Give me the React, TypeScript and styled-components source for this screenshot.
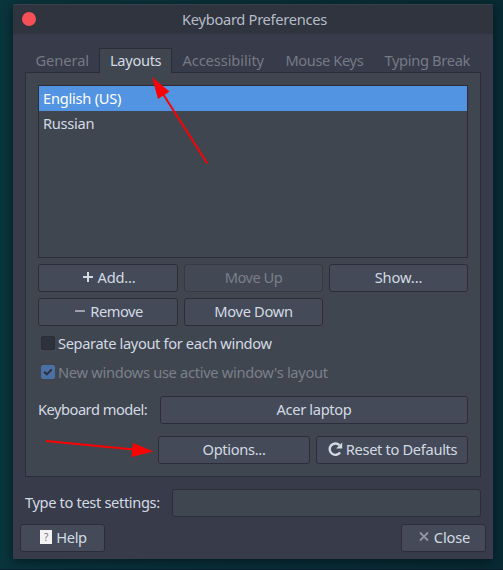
import React from "react";
import styled, { createGlobalStyle } from "styled-components";

const GlobalStyle = createGlobalStyle`
  * { box-sizing: border-box; }
  body {
    margin: 0;
    font-family: "Noto Sans", "Open Sans", sans-serif;
    font-size: 14.67px;
    line-height: 20px;
    color: #d3dae3;
  }
`;

const Desktop = styled.div`
  position: relative;
  width: 503px;
  height: 570px;
  padding: 4px 10px 0 13px;
  overflow: hidden;
  background: linear-gradient(90deg, #0a353d, #082b34);
  border-bottom: 1px solid #081c2e;
`;

const Window = styled.div`
  display: flex;
  flex-direction: column;
  width: 480px;
  height: 555px;
  border-radius: 2px 2px 0 0;
  background: #383b49;
  box-shadow: 0 3px 11px rgba(0, 10, 15, 0.6);
`;

const TitleBar = styled.header`
  display: grid;
  grid-template-columns: 32px 1fr 29px;
  align-items: center;
  height: 30px;
  padding: 0;
  border-top: 1px solid #3a404b;
  border-radius: 2px 2px 0 0;
  background: #2f343f;
`;

const CloseDot = styled.button`
  width: 14px;
  height: 14px;
  margin: -1px 0 0 9px;
  padding: 0;
  border: 0;
  border-radius: 50%;
  background: #f55058;
`;

const Text = styled.span<{ $track?: number }>`
  white-space: nowrap;
  letter-spacing: ${(p) => p.$track ?? -0.33}px;
`;

const Title = styled.h1`
  margin: -2px 0 0;
  text-align: center;
  font-size: inherit;
  font-weight: 400;
  color: #b6bcc8;
`;

const Tabs = styled.nav`
  display: flex;
  height: 25px;
  margin: 14px 12px -1px;
`;

const Tab = styled.div<{ $width: number; $active?: boolean }>`
  width: ${(p) => p.$width}px;
  height: 25px;
  padding: ${(p) => (p.$active ? "1px 0 0 10px" : "2px 0 0 10.4px")};
  border: ${(p) => (p.$active ? "1px solid #2b2e39" : "0")};
  border-bottom: 0;
  background: ${(p) => (p.$active ? "#404650" : "transparent")};
  color: ${(p) => (p.$active ? "#d3dae3" : "#767a85")};
  white-space: nowrap;
  z-index: 1;
`;

const Panel = styled.section`
  width: 456px;
  height: 405px;
  margin-left: 12px;
  padding: 12px;
  border: 1px solid #2b2e39;
  background: #404650;
`;

const List = styled.div`
  height: 173px;
  border: 1px solid #2b2e39;
`;

const ListRow = styled.div<{ $selected?: boolean }>`
  height: 25px;
  padding: 2px 4px;
  background: ${(p) => (p.$selected ? "#5294e2" : "transparent")};
  color: ${(p) => (p.$selected ? "#ffffff" : "#d3dae3")};
`;

const ButtonGrid = styled.div`
  display: grid;
  grid-template-columns: 140px 139px 139px;
  gap: 6px;
  margin-top: 6px;
`;

const Button = styled.button<{ $width?: number; $gap?: number; $shift?: number }>`
  display: flex;
  align-items: center;
  justify-content: center;
  gap: ${(p) => p.$gap ?? 5}px;
  width: ${(p) => (p.$width ? `${p.$width}px` : "100%")};
  height: 28px;
  padding: 0 0 2px ${(p) => p.$shift ?? 0}px;
  border: 1px solid #2b2e39;
  border-radius: 3px;
  background: #444a58;
  color: #d3dae3;
  font: inherit;
  &:disabled {
    border-color: #353945;
    background: #424854;
    color: #7a7f89;
  }
`;

const CheckRow = styled.label<{ $top: number; $muted?: boolean }>`
  display: flex;
  align-items: center;
  gap: 3px;
  height: 20px;
  margin: ${(p) => p.$top}px 0 0 3px;
  color: ${(p) => (p.$muted ? "#7b808a" : "#d3dae3")};
`;

const CheckBox = styled.span<{ $checked?: boolean }>`
  display: flex;
  width: 14px;
  height: 14px;
  border: 1px solid ${(p) => (p.$checked ? "#4a70a5" : "#292c36")};
  border-radius: 2px;
  background: ${(p) => (p.$checked ? "#4a70a5" : "#2e323d")};
`;

const FieldRow = styled.div<{ $top: number; $left?: number }>`
  display: flex;
  align-items: center;
  justify-content: space-between;
  height: 28px;
  margin: ${(p) => p.$top}px 0 0 ${(p) => p.$left ?? 0}px;
`;

const FieldLabel = styled(Text)`
  padding-bottom: 2px;
`;

const Footer = styled.footer`
  padding: 0 7px;
`;

const TestRow = styled(FieldRow)`
  padding: 0 5px;
`;

const Entry = styled.input`
  width: 309px;
  height: 28px;
  border: 1px solid #2b2e39;
  border-radius: 3px;
  background: #404650;
`;

const Arrows = styled.svg`
  position: absolute;
  inset: 0;
  z-index: 2;
  pointer-events: none;
`;

const Glyph = styled.svg`
  display: block;
  flex: none;
`;

const HelpMark = styled.span`
  width: 12px;
  height: 14px;
  background: #f2f2f2;
  color: #777;
  font: 10px/15px "Noto Sans", sans-serif;
  text-align: center;
`;

export default function App() {
  return (
    <>
      <GlobalStyle />
      <Desktop>
        <Window>
          <TitleBar>
            <CloseDot aria-label="Close window" />
            <Title><Text $track={-0.3}>Keyboard Preferences</Text></Title>
          </TitleBar>
          <Tabs>
            <Tab $width={74}><Text $track={-0.05}>General</Text></Tab>
            <Tab $width={73} $active><Text>Layouts</Text></Tab>
            <Tab $width={103}><Text $track={-0.08}>Accessibility</Text></Tab>
            <Tab $width={99}><Text $track={-0.4}>Mouse Keys</Text></Tab>
            <Tab $width={107}><Text>Typing Break</Text></Tab>
          </Tabs>
          <Panel>
            <List>
              <ListRow $selected><Text $track={-0.25}>English (US)</Text></ListRow>
              <ListRow><Text $track={-0.3}>Russian</Text></ListRow>
            </List>
            <ButtonGrid>
              <Button $shift={2}>
                <Glyph width="10" height="10"><path d="M5 0V10M0 5H10" stroke="#d3dae3" strokeWidth="2" /></Glyph>
                <Text $track={-0.2}>Add...</Text>
              </Button>
              <Button disabled><Text $track={-0.5}>Move Up</Text></Button>
              <Button><Text $track={-0.1}>Show...</Text></Button>
              <Button $shift={2}>
                <Glyph width="10" height="10"><path d="M0 5H10" stroke="#9da2ac" strokeWidth="2" /></Glyph>
                <Text $track={-0.5}>Remove</Text>
              </Button>
              <Button><Text>Move Down</Text></Button>
            </ButtonGrid>
            <CheckRow $top={7}>
              <CheckBox /><Text $track={-0.37}>Separate layout for each window</Text>
            </CheckRow>
            <CheckRow $top={9} $muted>
              <CheckBox $checked>
                <Glyph width="12" height="12"><path d="M2.2 5.8L4.8 8.4L9.8 3.4" fill="none" stroke="#2b303c" strokeWidth="2" /></Glyph>
              </CheckBox>
              <Text $track={-0.3}>New windows use active window's layout</Text>
            </CheckRow>
            <FieldRow $top={14}>
              <FieldLabel $track={-0.5}>Keyboard model:</FieldLabel>
              <Button $width={308}><Text>Acer laptop</Text></Button>
            </FieldRow>
            <FieldRow $top={12} $left={120}>
              <Button $width={152}><Text>Options...</Text></Button>
              <Button $width={152} $gap={3} $shift={1}>
                <Glyph width="15" height="15" viewBox="0 0 15 15">
                  <path d="M12.1 10.3A5.7 5.7 0 1 1 11.4 3.1" fill="none" stroke="#d3dae3" strokeWidth="2.4" />
                  <path d="M14.2 0.5V6.6H8.1Z" fill="#d3dae3" />
                </Glyph>
                <Text>Reset to Defaults</Text>
              </Button>
            </FieldRow>
          </Panel>
          <Footer>
            <TestRow $top={12}>
              <FieldLabel $track={-0.36}>Type to test settings:</FieldLabel>
              <Entry aria-label="Type to test settings" />
            </TestRow>
            <FieldRow $top={7}>
              <Button $width={85} $gap={4} $shift={2}><HelpMark>?</HelpMark><Text>Help</Text></Button>
              <Button $width={85} $shift={2}>
                <Glyph width="10" height="10"><path d="M1 0.5L9 8.5M9 0.5L1 8.5" stroke="#9398a2" strokeWidth="1.8" /></Glyph>
                <Text $track={-0.15}>Close</Text>
              </Button>
            </FieldRow>
          </Footer>
        </Window>
        <Arrows width="503" height="570">
          <g stroke="#ff0000" strokeWidth="2" fill="#ff0000">
            <path d="M207.3 163.5L163 94" />
            <path d="M152 77L169.5 91.5L158 99Z" stroke="none" />
            <path d="M46 441L134 449.5" />
            <path d="M153.5 451.5L133 443L131.5 457Z" stroke="none" />
          </g>
        </Arrows>
      </Desktop>
    </>
  );
}
